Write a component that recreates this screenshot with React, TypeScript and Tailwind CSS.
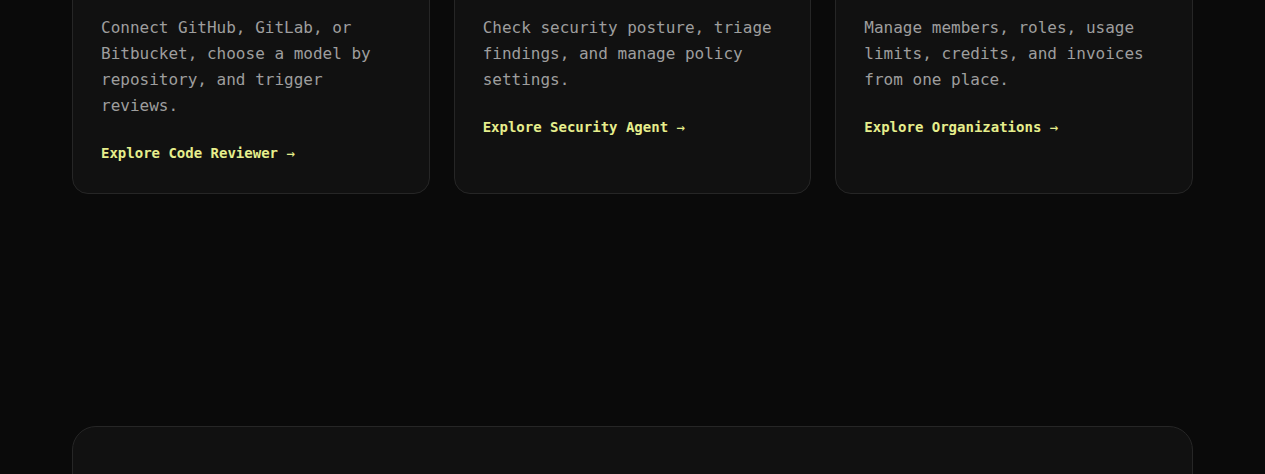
import React from "react";

const cards = [
  {
    title: "Code Reviewer",
    body: "Connect GitHub, GitLab, or Bitbucket, choose a model by repository, and trigger reviews.",
    link: "Explore Code Reviewer",
  },
  {
    title: "Security Agent",
    body: "Check security posture, triage findings, and manage policy settings.",
    link: "Explore Security Agent",
  },
  {
    title: "Organizations",
    body: "Manage members, roles, usage limits, credits, and invoices from one place.",
    link: "Explore Organizations",
  },
];

export default function App() {
  return (
    <div
      className="min-h-[474px] w-full overflow-hidden bg-[#0a0a0a]"
      style={{ fontFamily: '"DejaVu Sans Mono", "Liberation Mono", monospace' }}
    >
      <div className="mx-auto w-[1121px] -mt-[117px]">
        <div className="grid grid-cols-3 gap-6">
          {cards.map((c) => (
            <div
              key={c.title}
              className="flex flex-col rounded-2xl border border-[#262626] bg-[#111111] px-7 pt-7 pb-[30px]"
            >
              <div className="mb-5 flex h-10 w-10 items-center justify-center rounded-lg border border-[#2a2a2a] bg-[#181818]" />
              <h3 className="mb-[15px] text-xl leading-7 font-bold text-[#ededed]">{c.title}</h3>
              <p className="text-base leading-[26px] text-[#9e9e9e]">{c.body}</p>
              <a className="mt-[24px] text-sm leading-5 font-bold text-[#e6ee8c]">
                {c.link} <span className="font-normal">→</span>
              </a>
            </div>
          ))}
        </div>
        <div className="mt-[232px] h-[200px] rounded-3xl border border-[#262626] bg-[#111111]" />
      </div>
    </div>
  );
}
